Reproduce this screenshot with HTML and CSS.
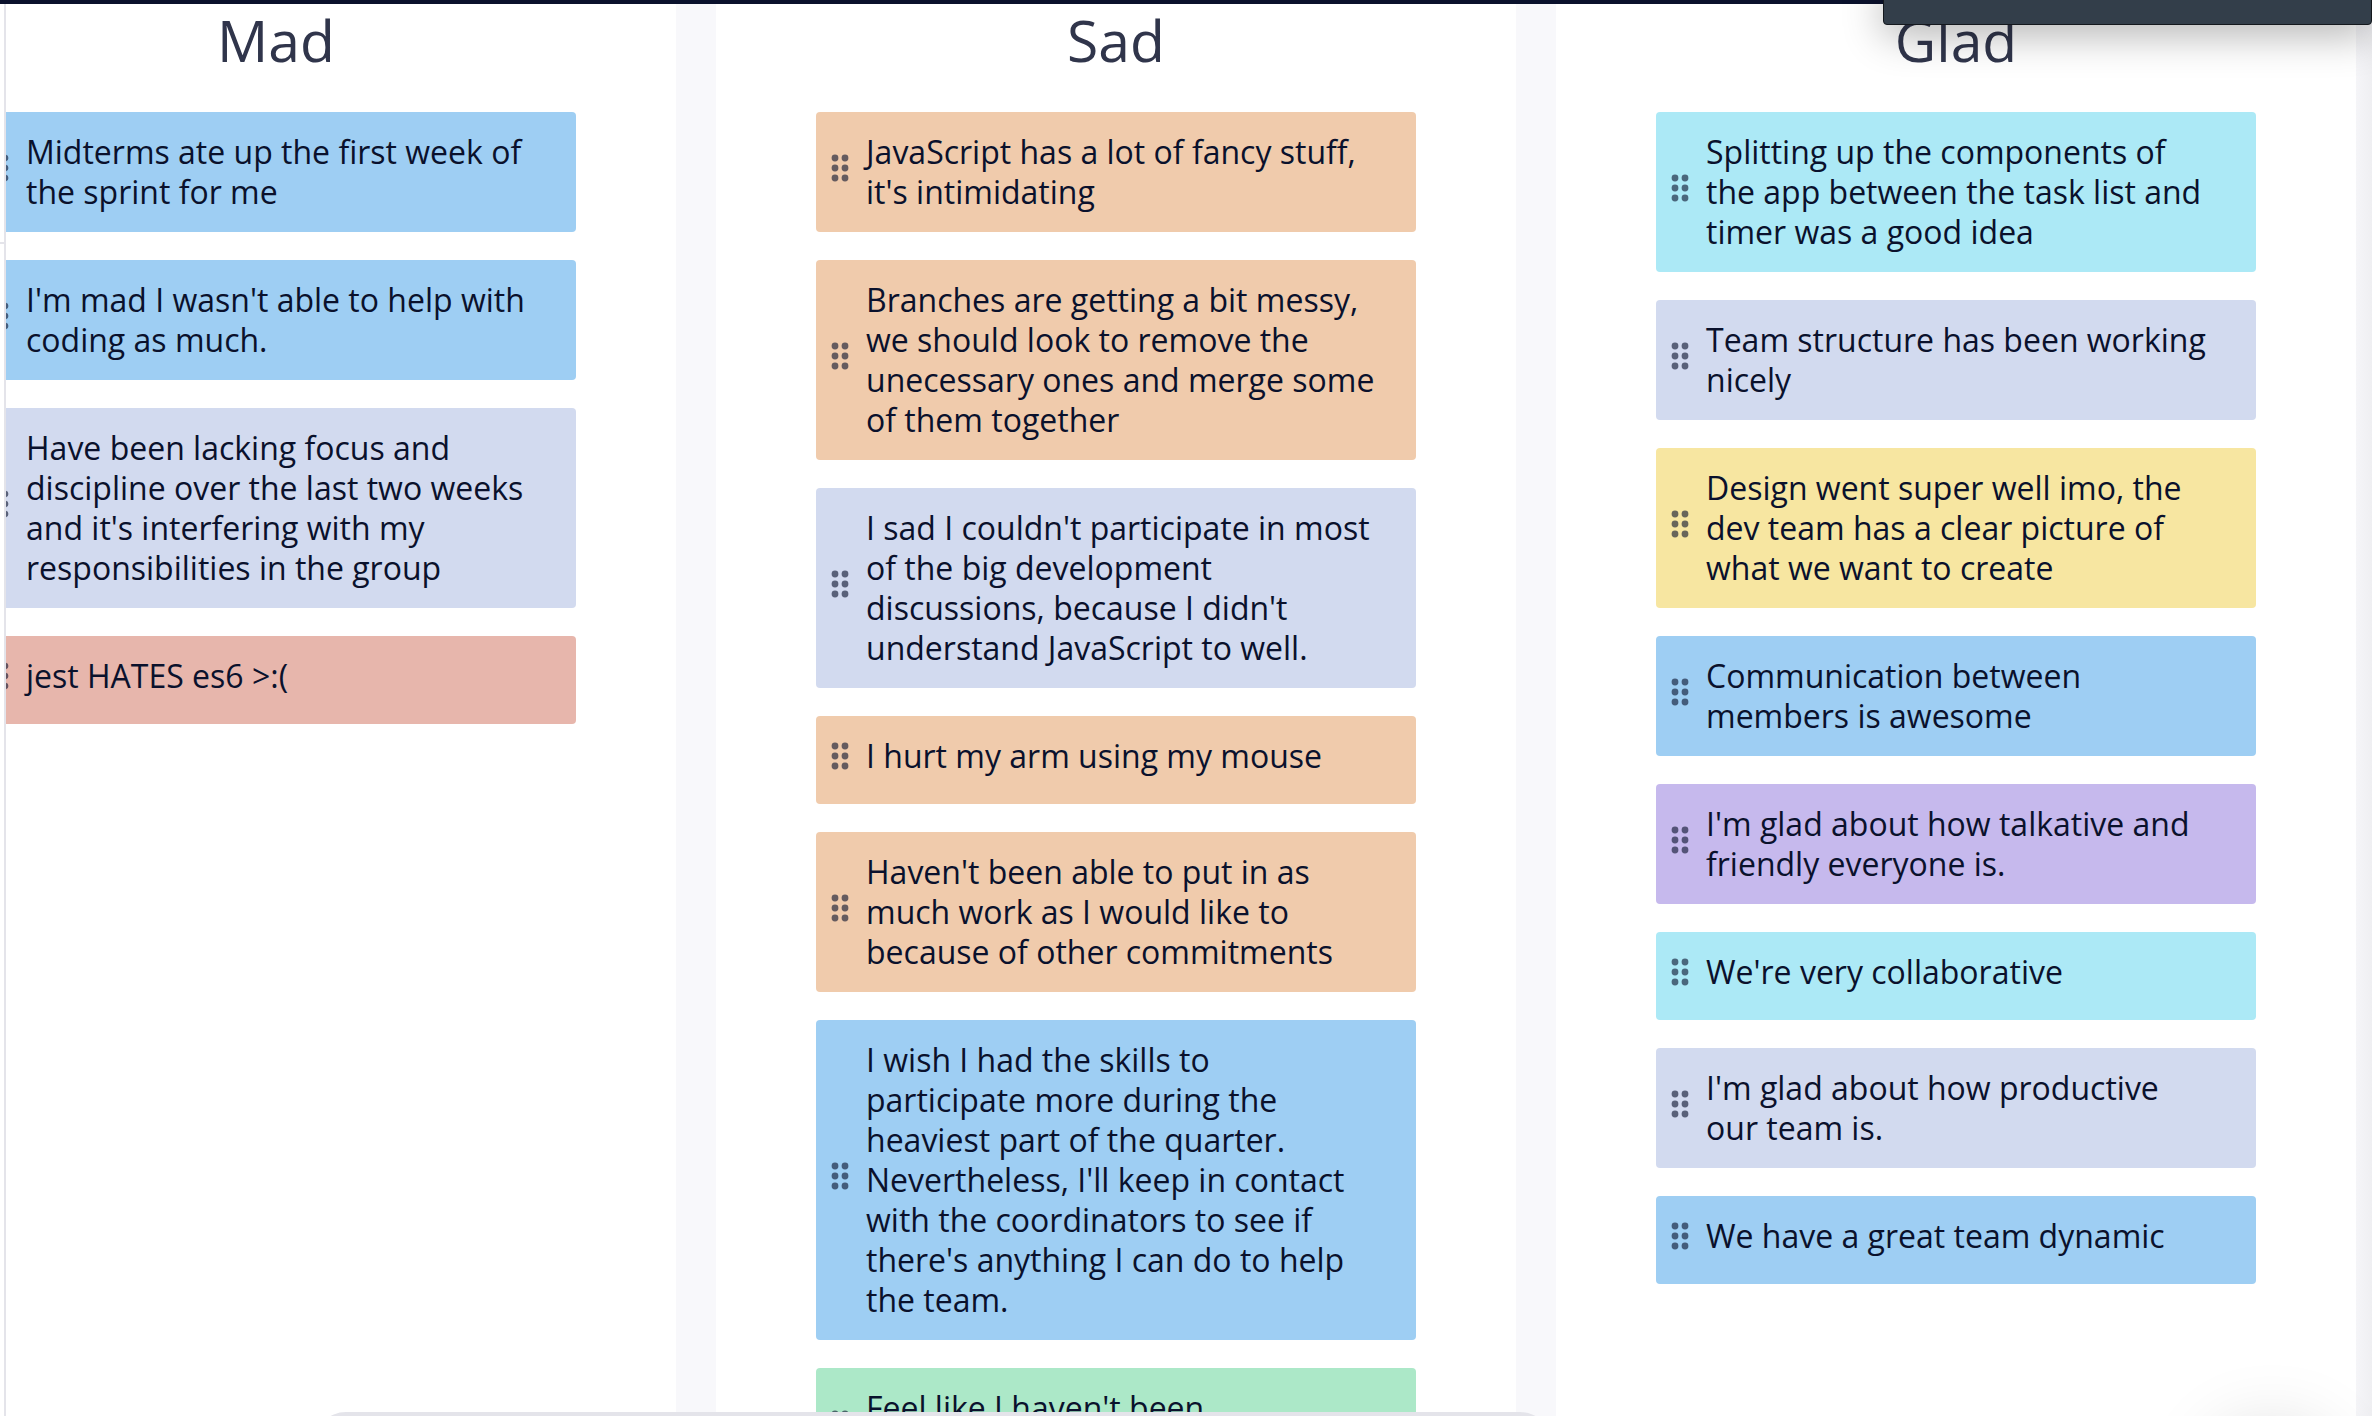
FILE: index.html
```html
<!DOCTYPE html>
<html lang="en">
<head>
<meta charset="utf-8">
<title>Retrospective board</title>
<link rel="stylesheet" href="styles.css">
</head>
<body>
<svg class="defs" aria-hidden="true">
  <symbol id="grip" viewBox="0 0 18 28">
    <circle cx="4" cy="4" r="3.4"/><circle cx="14" cy="4" r="3.4"/>
    <circle cx="4" cy="14" r="3.4"/><circle cx="14" cy="14" r="3.4"/>
    <circle cx="4" cy="24" r="3.4"/><circle cx="14" cy="24" r="3.4"/>
  </symbol>
</svg>
<div class="app">
  <header class="topbar"></header>
  <div class="body">
    <aside class="rail"><div class="rail-item"></div></aside>
    <main class="viewport">
      <div class="board">
        <section class="column">
          <h2>Mad</h2>
          <article class="card blue"><svg class="grip"><use href="#grip"/></svg><p>Midterms ate up the first week of the sprint for me</p></article>
          <article class="card blue"><svg class="grip"><use href="#grip"/></svg><p>I'm mad I wasn't able to help with coding as much.</p></article>
          <article class="card lavender"><svg class="grip"><use href="#grip"/></svg><p>Have been lacking focus and discipline over the last two weeks and it's interfering with my responsibilities in the group</p></article>
          <article class="card red"><svg class="grip"><use href="#grip"/></svg><p>jest HATES es6 &gt;:(</p></article>
        </section>
        <section class="column">
          <h2>Sad</h2>
          <article class="card orange"><svg class="grip"><use href="#grip"/></svg><p>JavaScript has a lot of fancy stuff, it's intimidating</p></article>
          <article class="card orange"><svg class="grip"><use href="#grip"/></svg><p>Branches are getting a bit messy, we should look to remove the unecessary ones and merge some of them together</p></article>
          <article class="card lavender"><svg class="grip"><use href="#grip"/></svg><p>I sad I couldn't participate in most of the big development discussions, because I didn't understand JavaScript to well.</p></article>
          <article class="card orange"><svg class="grip"><use href="#grip"/></svg><p>I hurt my arm using my mouse</p></article>
          <article class="card orange"><svg class="grip"><use href="#grip"/></svg><p>Haven't been able to put in as much work as I would like to because of other commitments</p></article>
          <article class="card blue"><svg class="grip"><use href="#grip"/></svg><p>I wish I had the skills to participate more during the heaviest part of the quarter. Nevertheless, I'll keep in contact with the coordinators to see if there's anything I can do to help the team.</p></article>
          <article class="card green tall"><svg class="grip"><use href="#grip"/></svg><p>Feel like I haven't been</p></article>
        </section>
        <section class="column">
          <h2>Glad</h2>
          <article class="card cyan"><svg class="grip"><use href="#grip"/></svg><p>Splitting up the components of the app between the task list and timer was a good idea</p></article>
          <article class="card lavender"><svg class="grip"><use href="#grip"/></svg><p>Team structure has been working nicely</p></article>
          <article class="card yellow"><svg class="grip"><use href="#grip"/></svg><p>Design went super well imo, the dev team has a clear picture of what we want to create</p></article>
          <article class="card blue"><svg class="grip"><use href="#grip"/></svg><p>Communication between members is awesome</p></article>
          <article class="card purple"><svg class="grip"><use href="#grip"/></svg><p>I'm glad about how talkative and friendly everyone is.</p></article>
          <article class="card cyan"><svg class="grip"><use href="#grip"/></svg><p>We're very collaborative</p></article>
          <article class="card lavender"><svg class="grip"><use href="#grip"/></svg><p>I'm glad about how productive our team is.</p></article>
          <article class="card blue"><svg class="grip"><use href="#grip"/></svg><p>We have a great team dynamic</p></article>
        </section>
      </div>
    </main>
  </div>
  <div class="popover"></div>
  <div class="tray"></div>
  <div class="fab-shadow"></div>
</div>
</body>
</html>
```
FILE: styles.css
```css
* { box-sizing: border-box; }
body {
  margin: 0;
  font-family: "Open Sans", "Noto Sans", sans-serif;
  color: #0a112c;
  background: #fff;
}
.defs { position: absolute; width: 0; height: 0; }
.app {
  position: relative;
  height: 100vh;
  overflow: hidden;
  display: flex;
  flex-direction: column;
}
.topbar { flex: none; height: 4px; background: #0a112c; }
.body { flex: 1; min-height: 0; display: flex; }
.rail { flex: none; width: 6px; border-right: 2px solid #e4e4ea; }
.rail-item { height: 240px; border-bottom: 2px solid #e4e4ea; }
.viewport { flex: 1; min-width: 0; overflow: hidden; background: #f8f8fb; }
.board {
  display: flex;
  gap: 40px;
  min-height: 100%;
  margin-left: -130px;
  padding-right: 16px;
  background: linear-gradient(to left, #efeff2, #f8f8fb 24px);
}
.column {
  flex: 1;
  min-width: 0;
  display: flex;
  flex-direction: column;
  gap: 28px;
  padding: 0 100px 28px;
  background: #fff;
}
h2 {
  margin: 0 0 8px;
  font-size: 57px;
  line-height: 72px;
  font-weight: 400;
  text-align: center;
  color: #30354b;
}
.card {
  flex: none;
  display: flex;
  align-items: center;
  min-height: 88px;
  padding: 20px 40px 20px 15px;
  border-radius: 4px;
}
.card p {
  align-self: flex-start;
  flex: 1;
  margin: 0;
  padding-left: 17px;
  font-size: 32px;
  line-height: 40px;
}
.grip {
  flex: none;
  width: 18px;
  height: 28px;
  margin-bottom: 8px;
  fill: #0a112c;
  opacity: .6;
}
.tall { min-height: 120px; }
.blue { background: #9ecef3; }
.lavender { background: #d2daef; }
.red { background: #e7b6ac; }
.orange { background: #f0cbac; }
.green { background: #ace8c8; }
.cyan { background: #ace9f6; }
.yellow { background: #f7e6a1; }
.purple { background: #c6b9ed; }
.popover {
  position: absolute;
  top: -20px;
  right: 0;
  width: 489px;
  height: 45px;
  background: #333e4a;
  border: 1px solid #14181d;
  border-radius: 4px;
  box-shadow: 0 10px 40px rgba(0, 0, 0, .3);
}
.tray {
  position: absolute;
  left: 314px;
  right: 820px;
  bottom: -60px;
  height: 64px;
  background: #e4e4ea;
  border-radius: 32px;
}
.fab-shadow {
  position: absolute;
  right: 44px;
  bottom: -130px;
  width: 112px;
  height: 112px;
  border-radius: 50%;
  box-shadow: 0 0 80px rgba(0, 0, 0, .2);
}
```
